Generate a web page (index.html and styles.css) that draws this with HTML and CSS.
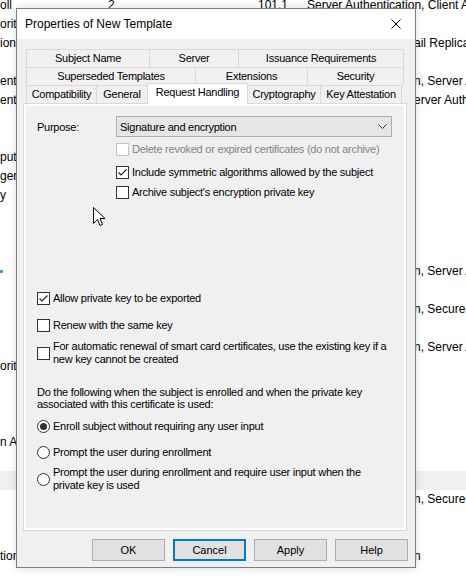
FILE: index.html
```html
<!DOCTYPE html>
<html>
<head>
<meta charset="utf-8">
<link rel="stylesheet" href="styles.css">
</head>
<body>
<div class="list">
  <div class="row"><span class="c1">oll</span><span class="c2">2</span><span class="c3">101.1</span><span class="cp">Server Authentication, Client Authentication</span></div>
  <div class="row"><span class="c1">orit</span></div>
  <div class="row"><span class="c1">ion</span><span class="c5">ail Replication</span></div>
  <div class="row"></div>
  <div class="row"><span class="c1">ent</span><span class="c5">n, Server Authentication</span></div>
  <div class="row"><span class="c1">ent</span><span class="c5">erver Authentication</span></div>
  <div class="row"></div>
  <div class="row"></div>
  <div class="row"><span class="c1">put</span></div>
  <div class="row"><span class="c1">gent</span></div>
  <div class="row"><span class="c1">y</span></div>
  <div class="row"></div>
  <div class="row"></div>
  <div class="row"></div>
  <div class="row"><span class="c1"><span class="bluemark"></span></span><span class="c5">n, Server Authentication</span></div>
  <div class="row"></div>
  <div class="row"><span class="c5">n, Secure Email</span></div>
  <div class="row"></div>
  <div class="row"><span class="c5">n, Server Authentication</span></div>
  <div class="row"><span class="c1">ority</span></div>
  <div class="row"></div>
  <div class="row"></div>
  <div class="row"></div>
  <div class="row"><span class="c1">n A</span></div>
  <div class="row"></div>
  <div class="row hl"></div>
  <div class="row"><span class="c5">n, Secure Email</span></div>
  <div class="row"></div>
  <div class="row"></div>
  <div class="row"><span class="c1">tion</span><span class="c5">n</span></div>
</div>

<div class="dialog">
  <div class="titlebar">
    <span class="title">Properties of New Template</span>
    <svg class="close" width="10" height="10" viewBox="0 0 10 10"><path d="M0.5 0.5 L9.5 9.5 M9.5 0.5 L0.5 9.5" stroke="#000" stroke-width="1"/></svg>
  </div>
  <div class="dbody">
    <div class="tabs">
      <div class="tabrow">
        <div class="tab w123">Subject Name</div>
        <div class="tab w89">Server</div>
        <div class="tab w166">Issuance Requirements</div>
      </div>
      <div class="tabrow">
        <div class="tab w169">Superseded Templates</div>
        <div class="tab w112">Extensions</div>
        <div class="tab w97">Security</div>
      </div>
      <div class="tabrow front">
        <div class="tab w70">Compatibility</div>
        <div class="tab w51">General</div>
        <div class="tab w101 sel">Request Handling</div>
        <div class="tab w74">Cryptography</div>
        <div class="tab w82">Key Attestation</div>
      </div>
    </div>
    <div class="panel">
      <div class="page">
        <div class="purpose">
          <span class="plabel">Purpose:</span>
          <div class="select">
            <span>Signature and encryption</span>
            <svg width="9" height="5" viewBox="0 0 9 5"><path d="M0.5 0.5 L4.5 4.5 L8.5 0.5" fill="none" stroke="#333" stroke-width="1"/></svg>
          </div>
        </div>
        <div class="indent">
          <div class="opt o1 disabled nw"><span class="box"></span><span>Delete revoked or expired certificates (do not archive)</span></div>
          <div class="opt o2 nw"><span class="box"><svg width="11" height="11" viewBox="0 0 11 11"><path d="M1.5 5.5 L4 8 L9.5 2.5" fill="none" stroke="#222" stroke-width="1.1"/></svg></span><span>Include symmetric algorithms allowed by the subject</span></div>
          <div class="opt o3 nw"><span class="box"></span><span>Archive subject's encryption private key</span></div>
        </div>
        <div class="opt o4 nw"><span class="box"><svg width="11" height="11" viewBox="0 0 11 11"><path d="M1.5 5.5 L4 8 L9.5 2.5" fill="none" stroke="#222" stroke-width="1.1"/></svg></span><span>Allow private key to be exported</span></div>
        <div class="opt o5 nw"><span class="box"></span><span>Renew with the same key</span></div>
        <div class="opt o6"><span class="box"></span><span>For automatic renewal of smart card certificates, use the existing key if a new key cannot be created</span></div>
        <p class="para">Do the following when the subject is enrolled and when the private key associated with this certificate is used:</p>
        <div class="opt r1 nw"><span class="radio on"></span><span>Enroll subject without requiring any user input</span></div>
        <div class="opt r2 nw"><span class="radio"></span><span>Prompt the user during enrollment</span></div>
        <div class="opt r3"><span class="radio"></span><span>Prompt the user during enrollment and require user input when the private key is used</span></div>
      </div>
    </div>
    <div class="buttons">
      <button class="btn">OK</button>
      <button class="btn focus">Cancel</button>
      <button class="btn">Apply</button>
      <button class="btn">Help</button>
    </div>
  </div>
  <svg class="cursor" width="13" height="21" viewBox="0 0 13 21"><path d="M0.5 0.5 L0.5 16.5 L4.5 12.5 L7 18.5 L9.5 17.5 L7 11.5 L12 11.5 Z" fill="#fff" stroke="#000" stroke-width="1" stroke-linejoin="miter"/></svg>
</div>
</body>
</html>
```

FILE: styles.css
```css
html, body {
  margin: 0;
  padding: 0;
  background: #fff;
  overflow: hidden;
  width: 466px;
  height: 578px;
}
body {
  font-family: "Liberation Sans", Arial, sans-serif;
  font-size: 12px;
  color: #000;
  position: relative;
}
.list {
  margin-top: -4px;
}
.row {
  display: grid;
  grid-template-columns: 108px 150px 49px 107px 1fr;
  height: 19px;
  line-height: 19px;
  white-space: nowrap;
  overflow: hidden;
}
.row.hl {
  background: #f0f0f0;
}
.c1 { grid-column: 1; }
.c2 { grid-column: 2; }
.c3 { grid-column: 3; }
.cp { grid-column: 4 / 6; }
.c5 { grid-column: 5; }
.bluemark {
  display: inline-block;
  width: 3px;
  height: 3px;
  background: #3c9be8;
  vertical-align: middle;
}

.dialog {
  position: absolute;
  left: 16px;
  top: 8px;
  width: 400px;
  height: 560px;
  box-sizing: border-box;
  border: 1px solid #7e7e7e;
  background: #f0f0f0;
  display: flex;
  flex-direction: column;
  box-shadow: 0 0 8px rgba(0,0,0,0.15);
}
.titlebar {
  height: 30px;
  background: #fff;
  display: flex;
  align-items: center;
  justify-content: space-between;
  padding: 0 9px 0 8px;
  flex: none;
}
.title {
  font-size: 12px;
}
.close {
  display: block;
  margin-right: 5px;
}
.dbody {
  flex: 1;
  padding: 10px 8px 0 6px;
  display: flex;
  flex-direction: column;
  font-size: 11px;
  letter-spacing: -0.25px;
}
.tabs {
  padding: 0 2px 0 3px;
}
.tabrow {
  display: flex;
  height: 18px;
  align-items: flex-start;
}
.tab {
  box-sizing: border-box;
  height: 18px;
  border-top: 1px solid #d9d9d9;
  border-left: 1px solid #d9d9d9;
  text-align: center;
  line-height: 17px;
  white-space: nowrap;
  background: #f0f0f0;
}
.tab:last-child {
  border-right: 1px solid #d9d9d9;
}
.tab.sel {
  background: #fff;
  height: 21px;
  margin-top: -2px;
  margin-bottom: -3px;
  position: relative;
  z-index: 2;
  border-right: 1px solid #d9d9d9;
  margin-right: -1px;
  line-height: 17px;
}
.w123 { width: 123px; }
.w89 { width: 89px; }
.w166 { width: 166px; }
.w169 { width: 169px; }
.w112 { width: 112px; }
.w97 { width: 97px; }
.w70 { width: 70px; }
.w51 { width: 51px; }
.w101 { width: 101px; }
.w74 { width: 73px; }
.w82 { width: 82px; }

.panel {
  border: 1px solid #d9d9d9;
  background: #fff;
  padding: 2px;
  height: 428px;
  box-sizing: border-box;
  position: relative;
  z-index: 1;
}
.page {
  background: #f0f0f0;
  height: 100%;
  box-sizing: border-box;
  padding: 10px 12px 0 11px;
  display: flex;
  flex-direction: column;
  align-items: flex-start;
}
.purpose {
  display: flex;
  align-items: center;
  width: 100%;
}
.plabel {
  width: 79px;
}
.select {
  box-sizing: border-box;
  width: 276px;
  height: 21px;
  background: #e5e5e5;
  border: 1px solid #adadad;
  display: flex;
  align-items: center;
  justify-content: space-between;
  padding: 0 4px 0 3px;
}
.indent {
  padding-left: 79px;
  display: flex;
  flex-direction: column;
  align-items: flex-start;
}
.opt {
  display: flex;
  align-items: center;
  line-height: 13px;
}
.nw { white-space: nowrap; }
.box {
  box-sizing: border-box;
  width: 13px;
  height: 13px;
  border: 1px solid #333;
  background: #fff;
  margin-right: 3px;
  flex: none;
  display: flex;
  align-items: center;
  justify-content: center;
}
.box svg { display: block; }
.radio {
  box-sizing: border-box;
  width: 13px;
  height: 13px;
  border: 1px solid #333;
  border-radius: 50%;
  background: #fff;
  margin-right: 3px;
  flex: none;
  display: flex;
  align-items: center;
  justify-content: center;
}
.radio.on::after {
  content: "";
  width: 7px;
  height: 7px;
  border-radius: 50%;
  background: #333;
}
.disabled { color: #838383; }
.disabled .box { border-color: #c4c4c4; }
.o1 { margin-top: 6px; }
.o2 { margin-top: 10px; }
.o3 { margin-top: 7px; }
.o4 { margin-top: 93px; }
.o5 { margin-top: 14px; }
.o6 { margin-top: 8px; width: 352px; }
.para {
  margin: 20px 0 0 0;
  line-height: 12px;
  width: 345px;
}
.r1 { margin-top: 10px; }
.r2 { margin-top: 13px; }
.r3 { margin-top: 7px; width: 352px; }

.buttons {
  display: flex;
  justify-content: flex-end;
  gap: 8px;
  margin-top: 8px;
  margin-right: -1px;
}
.btn {
  box-sizing: border-box;
  width: 73px;
  height: 22px;
  background: #e1e1e1;
  border: 1px solid #adadad;
  font-family: "Liberation Sans", Arial, sans-serif;
  font-size: 11px;
  color: #000;
  padding: 0;
  margin: 0;
}
.btn.focus {
  border: 2px solid #0078d7;
}
.cursor {
  position: absolute;
  left: 76px;
  top: 198px;
  z-index: 5;
}
```
